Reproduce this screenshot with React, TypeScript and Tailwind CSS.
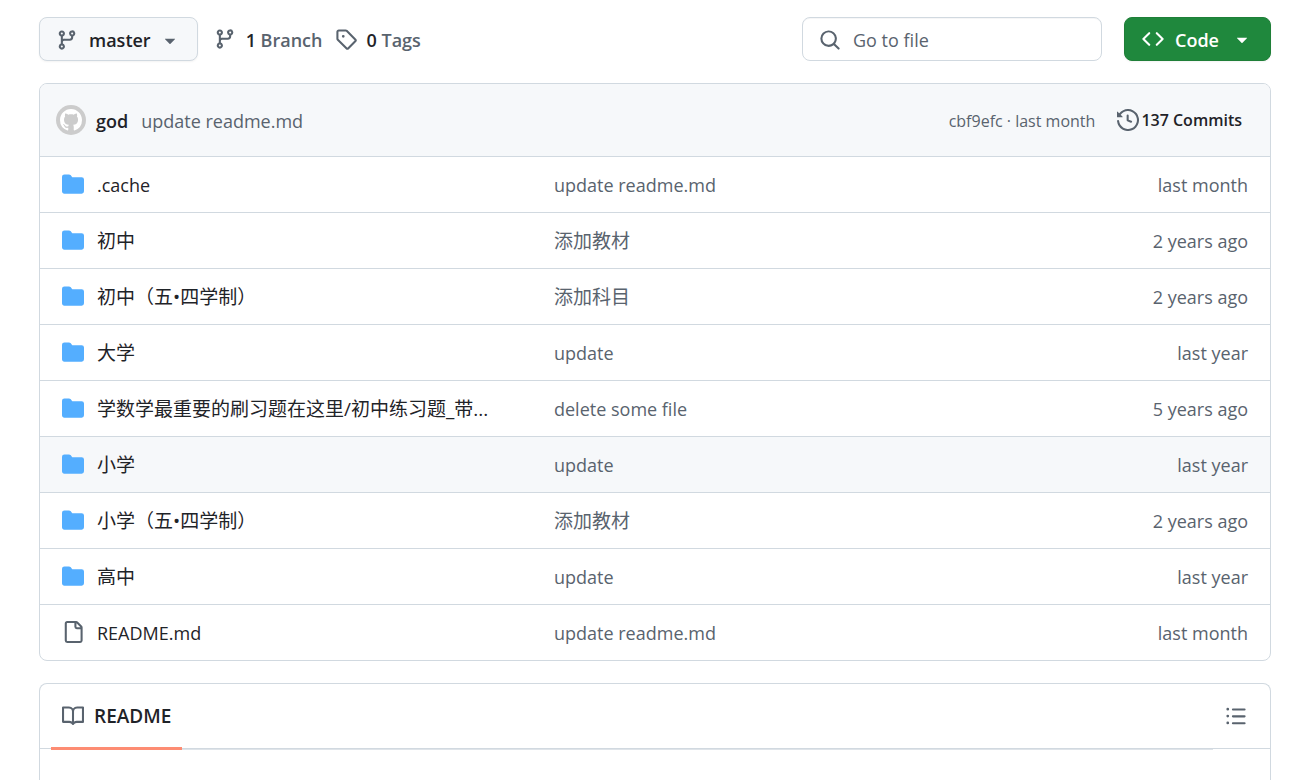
import React from 'react';

interface FileEntry {
  name: string;
  message: string;
  age: string;
  type: 'dir' | 'file';
  active?: boolean;
}

const ICONS = {
  branch:
    'M9.5 3.25a2.25 2.25 0 1 1 3 2.122V6A2.5 2.5 0 0 1 10 8.5H6a1 1 0 0 0-1 1v1.128a2.251 2.251 0 1 1-1.5 0V5.372a2.25 2.25 0 1 1 1.5 0v1.836A2.493 2.493 0 0 1 6 7h4a1 1 0 0 0 1-1v-.628A2.25 2.25 0 0 1 9.5 3.25Zm-6 0a.75.75 0 1 0 1.5 0 .75.75 0 0 0-1.5 0Zm8.25-.75a.75.75 0 1 0 0 1.5.75.75 0 0 0 0-1.5ZM4.25 12a.75.75 0 1 0 0 1.5.75.75 0 0 0 0-1.5Z',
  tag: 'M1 7.775V2.75C1 1.784 1.784 1 2.75 1h5.025c.464 0 .91.184 1.238.513l6.25 6.25a1.75 1.75 0 0 1 0 2.474l-5.026 5.026a1.75 1.75 0 0 1-2.474 0l-6.25-6.25A1.752 1.752 0 0 1 1 7.775Zm1.5 0c0 .066.026.13.073.177l6.25 6.25a.25.25 0 0 0 .354 0l5.025-5.025a.25.25 0 0 0 0-.354l-6.25-6.25a.25.25 0 0 0-.177-.073H2.75a.25.25 0 0 0-.25.25ZM6 5a1 1 0 1 1 0 2 1 1 0 0 1 0-2Z',
  search:
    'M10.68 11.74a6 6 0 0 1-7.922-8.982 6 6 0 0 1 8.982 7.922l3.04 3.04a.749.749 0 0 1-.326 1.275.749.749 0 0 1-.734-.215ZM11.5 7a4.499 4.499 0 1 0-8.997 0A4.499 4.499 0 0 0 11.5 7Z',
  code: 'm11.28 3.22 4.25 4.25a.75.75 0 0 1 0 1.06l-4.25 4.25a.749.749 0 0 1-1.275-.326.749.749 0 0 1 .215-.734L13.94 8l-3.72-3.72a.749.749 0 0 1 .326-1.275.749.749 0 0 1 .734.215Zm-6.56 0a.751.751 0 0 1 1.042.018.751.751 0 0 1 .018 1.042L2.06 8l3.72 3.72a.749.749 0 0 1-.326 1.275.749.749 0 0 1-.734-.215L.47 8.53a.75.75 0 0 1 0-1.06Z',
  caret:
    'm4.427 7.427 3.396 3.396a.25.25 0 0 0 .354 0l3.396-3.396A.25.25 0 0 0 11.396 7H4.604a.25.25 0 0 0-.177.427Z',
  history:
    'm.427 1.927 1.215 1.215a8.002 8.002 0 1 1-1.6 5.685.75.75 0 1 1 1.493-.154 6.5 6.5 0 1 0 1.18-4.458l1.358 1.358A.25.25 0 0 1 3.896 6H.25A.25.25 0 0 1 0 5.75V2.104a.25.25 0 0 1 .427-.177ZM7.75 4a.75.75 0 0 1 .75.75v2.992l2.028.812a.75.75 0 0 1-.557 1.392l-2.5-1A.751.751 0 0 1 7 8.25v-3.5A.75.75 0 0 1 7.75 4Z',
  dir: 'M1.75 1A1.75 1.75 0 0 0 0 2.75v10.5C0 14.216.784 15 1.75 15h12.5A1.75 1.75 0 0 0 16 13.25v-8.5A1.75 1.75 0 0 0 14.25 3H7.5a.25.25 0 0 1-.2-.1l-.9-1.2C6.07 1.26 5.55 1 5 1H1.75Z',
  file: 'M2 1.75C2 .784 2.784 0 3.75 0h6.586c.464 0 .909.184 1.237.513l2.914 2.914c.329.328.513.773.513 1.237v9.586A1.75 1.75 0 0 1 13.25 16h-9.5A1.75 1.75 0 0 1 2 14.25Zm1.75-.25a.25.25 0 0 0-.25.25v12.5c0 .138.112.25.25.25h9.5a.25.25 0 0 0 .25-.25V6h-2.75A1.75 1.75 0 0 1 9 4.25V1.5Zm6.75.062V4.25c0 .138.112.25.25.25h2.688l-.011-.013-2.914-2.914-.013-.011Z',
  book: 'M0 1.75A.75.75 0 0 1 .75 1h4.253c1.227 0 2.317.59 3 1.501A3.743 3.743 0 0 1 11.006 1h4.245a.75.75 0 0 1 .75.75v10.5a.75.75 0 0 1-.75.75h-4.507a2.25 2.25 0 0 0-1.591.659l-.622.621a.75.75 0 0 1-1.06 0l-.622-.621A2.25 2.25 0 0 0 5.258 13H.75a.75.75 0 0 1-.75-.75Zm7.251 10.324.004-5.073-.002-2.253A2.25 2.25 0 0 0 5.003 2.5H1.5v9h3.757a3.75 3.75 0 0 1 1.994.574ZM8.755 4.75l-.004 7.322a3.752 3.752 0 0 1 1.992-.572H14.5v-9h-3.495a2.25 2.25 0 0 0-2.25 2.25Z',
  list: 'M5.75 2.5h8.5a.75.75 0 0 1 0 1.5h-8.5a.75.75 0 0 1 0-1.5Zm0 5h8.5a.75.75 0 0 1 0 1.5h-8.5a.75.75 0 0 1 0-1.5Zm0 5h8.5a.75.75 0 0 1 0 1.5h-8.5a.75.75 0 0 1 0-1.5ZM2 14a1 1 0 1 1 0-2 1 1 0 0 1 0 2Zm1-6a1 1 0 1 1-2 0 1 1 0 0 1 2 0ZM2 4a1 1 0 1 1 0-2 1 1 0 0 1 0 2Z',
  github:
    'M8 0c4.42 0 8 3.58 8 8a8.013 8.013 0 0 1-5.45 7.59c-.4.08-.55-.17-.55-.38 0-.27.01-1.13.01-2.2 0-.75-.25-1.23-.54-1.48 1.78-.2 3.65-.88 3.65-3.95 0-.88-.31-1.59-.82-2.15.08-.2.36-1.02-.08-2.12 0 0-.67-.22-2.2.82-.64-.18-1.32-.27-2-.27-.68 0-1.36.09-2 .27-1.53-1.03-2.2-.82-2.2-.82-.44 1.1-.16 1.92-.08 2.12-.51.56-.82 1.28-.82 2.15 0 3.06 1.86 3.75 3.64 3.95-.23.2-.44.55-.51 1.07-.46.21-1.61.55-2.33-.66-.15-.24-.6-.83-1.23-.82-.67.01-.27.38.01.53.34.19.73.9.82 1.13.16.45.68 1.31 2.69.94 0 .67.01 1.3.01 1.49 0 .21-.15.45-.55.38A7.995 7.995 0 0 1 0 8c0-4.42 3.58-8 8-8Z',
};

const files: FileEntry[] = [
  { name: '.cache', message: 'update readme.md', age: 'last month', type: 'dir' },
  { name: '初中', message: '添加教材', age: '2 years ago', type: 'dir' },
  { name: '初中（五•四学制）', message: '添加科目', age: '2 years ago', type: 'dir' },
  { name: '大学', message: 'update', age: 'last year', type: 'dir' },
  {
    name: '学数学最重要的刷习题在这里/初中练习题_带...',
    message: 'delete some file',
    age: '5 years ago',
    type: 'dir',
  },
  { name: '小学', message: 'update', age: 'last year', type: 'dir', active: true },
  { name: '小学（五•四学制）', message: '添加教材', age: '2 years ago', type: 'dir' },
  { name: '高中', message: 'update', age: 'last year', type: 'dir' },
  { name: 'README.md', message: 'update readme.md', age: 'last month', type: 'file' },
];

// Chinese names are set a little larger than Latin ones
const textSize = (text: string): string =>
  /[\u4e00-\u9fff]/.test(text) ? 'text-[19px]/7' : 'text-lg/7';

const Icon: React.FC<{ name: keyof typeof ICONS; className?: string }> = ({
  name,
  className = 'text-[#59636e]',
}) => (
  <svg
    viewBox="0 0 16 16"
    fill="currentColor"
    aria-hidden="true"
    className={`size-[22px] shrink-0 ${className}`}
  >
    <path d={ICONS[name]} />
  </svg>
);

const Toolbar: React.FC = () => (
  <div className="flex items-center">
    <button className="flex h-11 items-center rounded-lg border border-[#d1d9e0] bg-[#f6f8fa] px-4 pt-0.5 font-semibold shadow-xs">
      <Icon name="branch" />
      <span className="ml-[11px]">master</span>
      <Icon name="caret" className="ml-2 text-[#59636e]" />
    </button>
    <a href="#branches" className="ml-4 flex items-center gap-2.5 font-semibold text-[#59636e]">
      <Icon name="branch" />
      <span className="pt-0.5">
        <span className="text-[#1f2328]">1</span> Branch
      </span>
    </a>
    <a href="#tags" className="ml-3 flex items-center gap-2.5 font-semibold text-[#59636e]">
      <Icon name="tag" />
      <span className="pt-0.5">
        <span className="text-[#1f2328]">0</span> Tags
      </span>
    </a>
    <label className="ml-auto flex h-11 w-[300px] items-center gap-3 rounded-lg border border-[#d1d9e0] px-4 pt-0.5 shadow-[inset_0_1px_0_#1f23280a]">
      <Icon name="search" />
      <input
        type="text"
        aria-label="Go to file"
        placeholder="Go to file"
        className="min-w-0 flex-1 bg-transparent outline-none placeholder:text-[#59636e]"
      />
    </label>
    <button className="ml-[22px] flex h-11 items-center rounded-lg border border-[#1f7f38] bg-[#1f883d] px-[17px] font-semibold text-white shadow-xs">
      <Icon name="code" className="text-white" />
      <span className="ml-[11px] pt-0.5">Code</span>
      <Icon name="caret" className="ml-3 text-white" />
    </button>
  </div>
);

const FileTable: React.FC = () => (
  <section className="mt-[22px] overflow-hidden rounded-lg border border-[#d1d9e0]">
    {/* Latest commit */}
    <div className="flex h-[72px] items-center bg-[#f6f8fa] pr-7 pl-4">
      <span className="flex size-[30px] items-center justify-center rounded-full bg-[#cccccc]">
        <Icon name="github" className="text-white" />
      </span>
      <a href="#author" className="ml-2.5 pt-0.5 font-semibold">
        god
      </a>
      <a href="#commit" className="ml-[13px] pt-0.5 text-[#59636e]">
        update readme.md
      </a>
      <span className="ml-auto pt-0.5 text-base text-[#59636e]">
        <a href="#cbf9efc">cbf9efc</a> · last month
      </span>
      <a href="#commits" className="ml-[22px] flex items-center gap-0.5 text-base font-semibold">
        <Icon name="history" />
        137 Commits
      </a>
    </div>
    <table className="-mb-px w-full table-fixed">
      <colgroup>
        <col className="w-[40%]" />
        <col />
        <col className="w-[190px]" />
      </colgroup>
      <tbody>
        {files.map((file) => (
          <tr
            key={file.name}
            className={`h-14 border-t border-[#d1d9e0] ${file.active ? 'bg-[#f6f8fa]' : ''}`}
          >
            <td className="pr-[38px] pb-0.5 pl-[22px]">
              <div className="flex items-center gap-[13px]">
                <Icon
                  name={file.type}
                  className={file.type === 'dir' ? 'text-[#54aeff]' : 'text-[#59636e]'}
                />
                <a href="#file" className={`truncate pt-0.5 ${textSize(file.name)}`}>
                  {file.name}
                </a>
              </div>
            </td>
            <td className={`truncate px-[22px] text-[#59636e] ${textSize(file.message)}`}>
              {file.message}
            </td>
            <td className="px-[22px] text-right text-[#59636e]">{file.age}</td>
          </tr>
        ))}
      </tbody>
    </table>
  </section>
);

const ReadmePanel: React.FC = () => (
  <section className="mt-[22px] rounded-t-lg border border-b-0 border-[#d1d9e0] pb-8">
    <div className="flex h-[65px] items-stretch border-b border-[#d1d9e0] pr-[23px] pl-[11px]">
      <nav className="-mb-0.5 flex flex-1 shadow-[inset_0_-1px_0_#d1d9e0b3]">
        <a
          href="#readme"
          className="flex items-center gap-2.5 border-b-3 border-[#fd8c73] px-[11px] pt-0.5 text-[19px] font-semibold"
        >
          <Icon name="book" />
          <span className="pt-0.5">README</span>
        </a>
      </nav>
      <button aria-label="Outline" className="ml-3">
        <Icon name="list" />
      </button>
    </div>
  </section>
);

const App: React.FC = () => (
  <main className="bg-white pt-[17px] pr-7 pl-[39px] font-['Open_Sans','Noto_Sans_CJK_SC',sans-serif] text-lg text-[#1f2328]">
    <Toolbar />
    <FileTable />
    <ReadmePanel />
  </main>
);

export default App;
